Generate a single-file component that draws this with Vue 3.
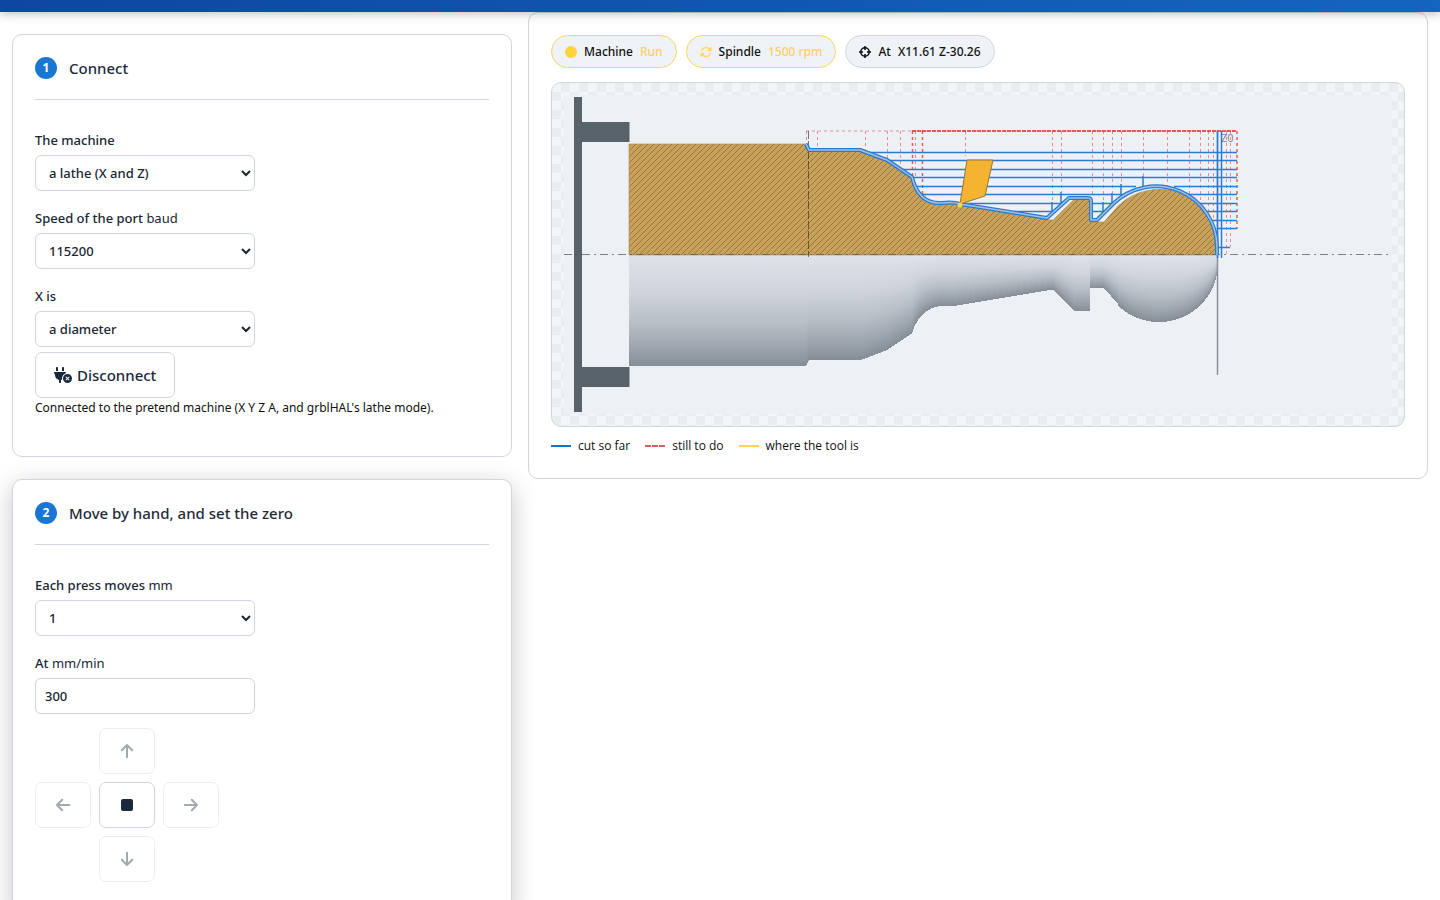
<script setup>
import { ref } from 'vue'

const machine = ref('a lathe (X and Z)')
const baud = ref('115200')
const xMode = ref('a diameter')
const step = ref('1')
const feed = ref('300')

const AXIS = 255

// Turned outline as [z, radius] pairs, up to where the ball begins.
const outline = [
  [629, 111], [806, 111], [809, 105], [861, 105], [887, 95], [912, 78.5], [915, 70],
  [918, 65], [924, 58], [932, 53], [942, 50.5], [954, 51], [1050, 35], [1053, 35],
  [1074, 55.5], [1090, 55.5], [1090, 33], [1104, 33], [1118, 49]
]
const outlinePoints = outline.map(([z, r]) => `L${z} ${AXIS - r}`).join(' ')
const stockPath = `M629 ${AXIS} ${outlinePoints} A59 59 0 0 1 1218 247 V${AXIS} Z`

function radiusAt(z) {
  if (z >= 1118) {
    const d = z - 1159
    return 8 + Math.sqrt(Math.max(0, 59 * 59 - d * d))
  }
  for (let i = 1; i < outline.length; i++) {
    const [z0, r0] = outline[i - 1]
    const [z1, r1] = outline[i]
    if (z < z1) return r0 + ((r1 - r0) * (z - z0)) / (z1 - z0)
  }
  return 0
}

// One shaded column for each unit of length, so the light follows the local radius.
const columns = []
for (let z = 629; z < 1218; z++) columns.push({ z, h: Math.round(radiusAt(z + 0.5)) })

const passes = [
  [152, 862, 1237], [160, 887, 1237], [169, 900, 1237], [177, 912, 1237],
  [186, 915, 1136], [186, 1174, 1237], [194, 920, 1124], [194, 1188, 1237],
  [203, 955, 1062], [203, 1092, 1113], [203, 1199, 1237],
  [211, 1014, 1053], [211, 1092, 1104], [211, 1206, 1237],
  [220, 1212, 1237], [228, 1217, 1237], [247, 1217, 1230]
]
const lifts = [
  [1052, 202, 212], [1061, 192, 203], [1103, 202, 212],
  [1112, 193, 203], [1121, 184, 195], [1143, 176, 186]
]
const retracts = [
  [806, 144], [817, 150], [865, 151], [887, 161], [900, 169], [915, 176], [965, 156],
  [1052, 202], [1061, 192], [1092, 196], [1103, 202], [1112, 193], [1121, 184], [1143, 176],
  [1167, 187], [1189, 195], [1200, 203], [1208, 211], [1213, 220], [1226, 254], [1230, 247]
]
const finishPath =
  'M806 144 L809 150 H860 L887 160 L912 177 C916 194 925 204 942 203 C950 202 954 202 960 204 ' +
  'L1047 218 L1069 198 H1088 Q1091 198 1091 201 V220 H1097 L1113 204 A61 61 0 0 1 1217 247 V255'
</script>

<template>
  <header class="topbar"></header>
  <main class="layout">
    <div class="steps">
      <section class="card">
        <h2 class="title"><span class="num">1</span>Connect</h2>
        <div class="field">
          <label for="machine">The machine</label>
          <select id="machine" v-model="machine">
            <option>a lathe (X and Z)</option>
            <option>a mill (X, Y and Z)</option>
          </select>
        </div>
        <div class="field">
          <label for="baud">Speed of the port <span class="unit">baud</span></label>
          <select id="baud" v-model="baud">
            <option>115200</option>
            <option>9600</option>
          </select>
        </div>
        <div class="field">
          <label for="xmode">X is</label>
          <select id="xmode" v-model="xMode">
            <option>a diameter</option>
            <option>a radius</option>
          </select>
        </div>
        <button class="btn disconnect" type="button">
          <svg width="18" height="16" viewBox="0 0 576 512" fill="currentColor" aria-hidden="true">
            <path d="M96 0C78.3 0 64 14.3 64 32v96h64V32c0-17.700-14.300-32-32-32zM288 0c-17.700 0-32 14.300-32 32v96h64V32c0-17.700-14.300-32-32-32zM32 160c-17.700 0-32 14.300-32 32s14.300 32 32 32v32c0 77.400 55 142 128 156.800V480c0 17.700 14.300 32 32 32s32-14.300 32-32V412.800c12.300-2.500 24.100-6.400 35.100-11.500c-2.100-10.800-3.100-21.900-3.100-33.300c0-80.300 53.800-148 127.300-169.200c.5-2.200.7-4.500.7-6.800c0-17.700-14.300-32-32-32H32zM432 512a144 144 0 1 0 0-288 144 144 0 1 0 0 288zm59.300-180.700L454.600 368l36.700 36.700c6.200 6.200 6.200 16.400 0 22.600s-16.400 6.200-22.600 0L432 390.600l-36.700 36.700c-6.200 6.200-16.400 6.200-22.600 0s-6.200-16.400 0-22.600L409.400 368l-36.700-36.700c-6.200-6.200-6.200-16.400 0-22.600s16.400-6.200 22.600 0L432 345.400l36.700-36.700c6.200-6.200 16.400-6.200 22.600 0s6.200 16.400 0 22.600z" />
          </svg>
          Disconnect
        </button>
        <p class="note">Connected to the pretend machine (X Y Z A, and grblHAL's lathe mode).</p>
      </section>

      <section class="card raised">
        <h2 class="title"><span class="num">2</span>Move by hand, and set the zero</h2>
        <div class="field">
          <label for="step">Each press moves <span class="unit">mm</span></label>
          <select id="step" v-model="step">
            <option>1</option>
            <option>10</option>
          </select>
        </div>
        <div class="field">
          <label for="feed">At <span class="unit">mm/min</span></label>
          <input id="feed" v-model="feed" type="text" inputmode="numeric" />
        </div>
        <div class="jog">
          <button class="btn up" type="button" disabled aria-label="Move X up">
            <svg class="arrow" viewBox="0 0 16 16"><path d="M8 14.200V2M2.800 7.200L8 2l5.200 5.200" /></svg>
          </button>
          <button class="btn left" type="button" disabled aria-label="Move Z left">
            <svg class="arrow" viewBox="0 0 16 16"><path d="M14.200 8H2M7.200 2.800L2 8l5.200 5.200" /></svg>
          </button>
          <button class="btn stop" type="button" aria-label="Stop">
            <svg width="12" height="12" viewBox="0 0 12 12"><rect width="12" height="12" rx="2" fill="currentColor" /></svg>
          </button>
          <button class="btn right" type="button" disabled aria-label="Move Z right">
            <svg class="arrow" viewBox="0 0 16 16"><path d="M1.800 8H14M8.800 2.800L14 8l-5.200 5.200" /></svg>
          </button>
          <button class="btn down" type="button" disabled aria-label="Move X down">
            <svg class="arrow" viewBox="0 0 16 16"><path d="M8 1.800V14M2.800 8.800L8 14l5.200-5.200" /></svg>
          </button>
        </div>
      </section>
    </div>

    <section class="card view">
      <div class="chips">
        <span class="chip active">
          <svg width="12" height="12" viewBox="0 0 12 12"><circle cx="6" cy="6" r="6" fill="#ffd23c" /></svg>
          <span>Machine</span><span class="value">Run</span>
        </span>
        <span class="chip active">
          <svg width="12" height="12" viewBox="0 0 512 512" fill="#ffd76a">
            <path d="M142.900 142.900c62.200-62.200 162.700-62.500 225.300-1L327 183c-6.900 6.900-8.900 17.200-5.200 26.200s12.500 14.800 22.200 14.800H472c13.300 0 24-10.700 24-24V72c0-9.700-5.800-18.500-14.800-22.200s-19.300-1.700-26.200 5.200L413.400 96.600c-87.600-86.500-228.700-86.200-315.800 1C73.200 122 55.600 150.700 44.800 181.400c-5.900 16.700 2.900 34.900 19.500 40.800s34.900-2.900 40.800-19.500c7.700-21.800 20.200-42.300 37.800-59.800zM16 312V440c0 9.700 5.800 18.500 14.800 22.200s19.300 1.700 26.200-5.200l41.600-41.600c87.600 86.500 228.700 86.200 315.800-1c24.400-24.400 42.100-53.100 52.900-83.700c5.900-16.700-2.900-34.900-19.500-40.800s-34.900 2.900-40.800 19.500c-7.700 21.800-20.200 42.300-37.800 59.800c-62.200 62.200-162.700 62.500-225.300 1L185 329c6.900-6.900 8.900-17.200 5.200-26.200s-12.500-14.800-22.200-14.800H40c-13.300 0-24 10.700-24 24z" />
          </svg>
          <span>Spindle</span><span class="value">1500 rpm</span>
        </span>
        <span class="chip">
          <svg width="12" height="12" viewBox="0 0 12 12" fill="none" stroke="#111" stroke-width="1.500">
            <circle cx="6" cy="6" r="4.200" />
            <path d="M6 0v4M6 8v4M0 6h4M8 6h4" />
          </svg>
          <span>At</span><span class="value">X11.61 Z-30.26</span>
        </span>
      </div>

      <div class="preview">
        <svg class="drawing" viewBox="564 95 828 319" role="img" aria-label="Side view of the turned part">
          <defs>
            <linearGradient id="metal" x1="0" y1="0" x2="0" y2="1">
              <stop offset="0" stop-color="#dee2e9" />
              <stop offset="0.350" stop-color="#cfd3db" />
              <stop offset="0.600" stop-color="#b9c0c8" />
              <stop offset="0.820" stop-color="#9fa6af" />
              <stop offset="1" stop-color="#858d97" />
            </linearGradient>
            <pattern id="hatch" width="6" height="6" patternUnits="userSpaceOnUse">
              <rect width="6" height="6" fill="#c8a15a" />
              <path d="M-1 1L1-1M0 6L6 0M5 7L7 5" stroke="#8a6c38" stroke-width="0.800" />
            </pattern>
          </defs>
          <rect x="564" y="95" width="828" height="319" fill="#edf1f6" />

          <g shape-rendering="crispEdges">
            <rect v-for="c in columns" :key="c.z" :x="c.z" :y="AXIS" width="1" :height="c.h" fill="url(#metal)" />
          </g>
          <path :d="stockPath" fill="url(#hatch)" stroke="#a78b58" stroke-width="0.600" />

          <path d="M564 254.500H1392" class="axis" />
          <g fill="#57626b">
            <rect x="574" y="97" width="8" height="315" />
            <rect x="582" y="122" width="47.500" height="20" />
            <rect x="582" y="367" width="47.500" height="20" />
          </g>

          <path d="M1217.500 131V375" stroke="#8b9199" stroke-width="1.500" />
          <text x="1221" y="142" class="mark">Z0</text>

          <g class="todo">
            <path v-for="[z, end] in retracts" :key="z" :d="`M${z}.500 131V${end}`" />
            <path d="M806 131H1237" />
          </g>
          <g class="todo strong">
            <path d="M912.500 131V177M922.500 131V195M1237 131V229" />
            <path d="M912 131H1237" class="dense" />
          </g>
          <path d="M808.500 131V257" class="parting" />

          <g class="cut">
            <path v-for="[y, a, b] in passes" :key="`${y}-${a}`" :d="`M${a} ${y}.500H${b}`" />
            <path v-for="[z, a, b] in lifts" :key="`l${z}`" :d="`M${z} ${a}V${b}`" />
            <path d="M1217.500 131V258M1221.500 131V258" />
          </g>
          <path :d="finishPath" class="finish outer" />
          <path :d="finishPath" class="finish inner" />

          <path d="M967 160H993L985 196L960 204Z" fill="#f4b431" stroke="#94783a" />
          <circle cx="960" cy="205" r="2.500" fill="#ffd54a" />
        </svg>
      </div>

      <div class="legend">
        <span class="key done">cut so far</span>
        <span class="key dashed">still to do</span>
        <span class="key tool">where the tool is</span>
      </div>
    </section>
  </main>
</template>

<style>
body {
  margin: 0;
  background: #fff;
}
</style>

<style scoped>
.topbar {
  position: sticky;
  top: 0;
  z-index: 2;
  height: 12px;
  background: linear-gradient(90deg, #0d47a1, #1565c0);
  box-shadow: 0 2px 10px rgba(0, 0, 0, 0.25);
}
.layout {
  display: grid;
  grid-template-columns: 5fr 9fr;
  align-items: start;
  gap: 16px;
  padding: 0 12px 24px;
  font: 13px/20px "Open Sans", "Noto Sans", sans-serif;
  color: #111;
}
.steps {
  display: flex;
  flex-direction: column;
  gap: 22px;
  padding-top: 22px;
}
.card {
  padding: 22px;
  border: 1px solid #cfd6df;
  border-radius: 10px;
  background: #fff;
}
.steps .card {
  padding-bottom: 38px;
}
.raised {
  box-shadow: 0 6px 26px rgba(0, 0, 0, 0.22);
}
.title {
  display: flex;
  align-items: center;
  gap: 12px;
  margin: 0 0 30px;
  padding-bottom: 20px;
  border-bottom: 1px solid #cfd6df;
  font: 500 15px/22px "Noto Sans", "Open Sans", sans-serif;
  color: #1f2b3a;
}
.num {
  width: 22px;
  height: 22px;
  border-radius: 50%;
  background: #1976d2;
  color: #fff;
  font-size: 12px;
  font-weight: 700;
  text-align: center;
}
.field {
  display: flex;
  flex-direction: column;
  align-items: flex-start;
  gap: 5px;
  margin-bottom: 17px;
}
label {
  font: 500 13px/20px "Noto Sans", "Open Sans", sans-serif;
  color: #1a2733;
}
.unit {
  font-weight: 400;
}
select,
input {
  box-sizing: border-box;
  width: 220px;
  height: 36px;
  padding: 0 9px;
  border: 1px solid #cfd6df;
  border-radius: 6px;
  background: #fff;
  color: #1a2733;
  font: 500 13px/20px "Noto Sans", "Open Sans", sans-serif;
}
.btn {
  display: flex;
  align-items: center;
  justify-content: center;
  height: 46px;
  padding: 0 18px;
  border: 1px solid #cfd6df;
  border-radius: 7px;
  background: #fff;
  color: #1a2a3a;
  font: 500 15px/20px "Noto Sans", "Open Sans", sans-serif;
}
.btn:disabled {
  opacity: 0.4;
}
.disconnect {
  gap: 5px;
  margin-top: -12px;
}
.note {
  margin: 0;
  font: 12px/20px "Noto Sans", "Open Sans", sans-serif;
}
.jog {
  display: grid;
  grid-template-columns: repeat(3, 56px);
  grid-template-areas: ". up ." "left stop right" ". down .";
  gap: 8px;
  margin-top: -3px;
}
.jog .btn {
  padding: 0;
}
.up { grid-area: up; }
.left { grid-area: left; }
.stop { grid-area: stop; }
.right { grid-area: right; }
.down { grid-area: down; }
.arrow {
  width: 16px;
  height: 16px;
  fill: none;
  stroke: currentColor;
  stroke-width: 2;
  stroke-linecap: round;
  stroke-linejoin: round;
}
.chips {
  display: flex;
  flex-wrap: wrap;
  gap: 9px;
  margin-bottom: 14px;
}
.chip {
  display: flex;
  align-items: center;
  gap: 7px;
  box-sizing: border-box;
  height: 33px;
  padding: 0 13px;
  border: 1px solid #cfd6df;
  border-radius: 17px;
  background: #eff3f8;
  font: 500 12px/20px "Noto Sans", "Open Sans", sans-serif;
}
.active {
  border-color: #f7d560;
}
.active .value {
  color: #ffcf66;
}
.preview {
  padding: 12px;
  border: 1px solid #cfd6df;
  border-radius: 10px;
  background: repeating-conic-gradient(#e9edf0 0 25%, #f3f6f9 0 50%) 0 0 / 18px 18px;
}
.drawing {
  display: block;
  width: 100%;
}
.axis {
  stroke: #4f5358;
  stroke-opacity: 0.7;
  stroke-dasharray: 8 4 2 4;
}
.mark {
  fill: #7b828b;
  font: 11px "Open Sans", sans-serif;
}
.todo {
  fill: none;
  stroke: #e53935;
  stroke-opacity: 0.55;
  stroke-dasharray: 3 3;
}
.strong {
  stroke-width: 1.500;
  stroke-opacity: 0.8;
}
.dense {
  stroke-width: 2;
  stroke-dasharray: 4 1;
}
.parting {
  stroke: #2c261a;
  stroke-opacity: 0.6;
  stroke-dasharray: 8 2;
}
.cut {
  fill: none;
  stroke: #2a7bd4;
  stroke-width: 1.500;
}
.finish {
  fill: none;
  stroke-linejoin: round;
}
.outer {
  stroke: #2b7acc;
  stroke-width: 4;
}
.inner {
  stroke: #9fc1e6;
  stroke-width: 1.500;
}
.legend {
  display: flex;
  gap: 15px;
  margin-top: 9px;
  font-size: 12px;
}
.key {
  display: flex;
  align-items: center;
  gap: 7px;
}
.key::before {
  content: "";
  width: 20px;
  border-top: 2px solid #1f6fc0;
}
.dashed::before {
  border-top: 2px dashed #d9605a;
}
.tool::before {
  border-color: #ffd54f;
}
</style>
